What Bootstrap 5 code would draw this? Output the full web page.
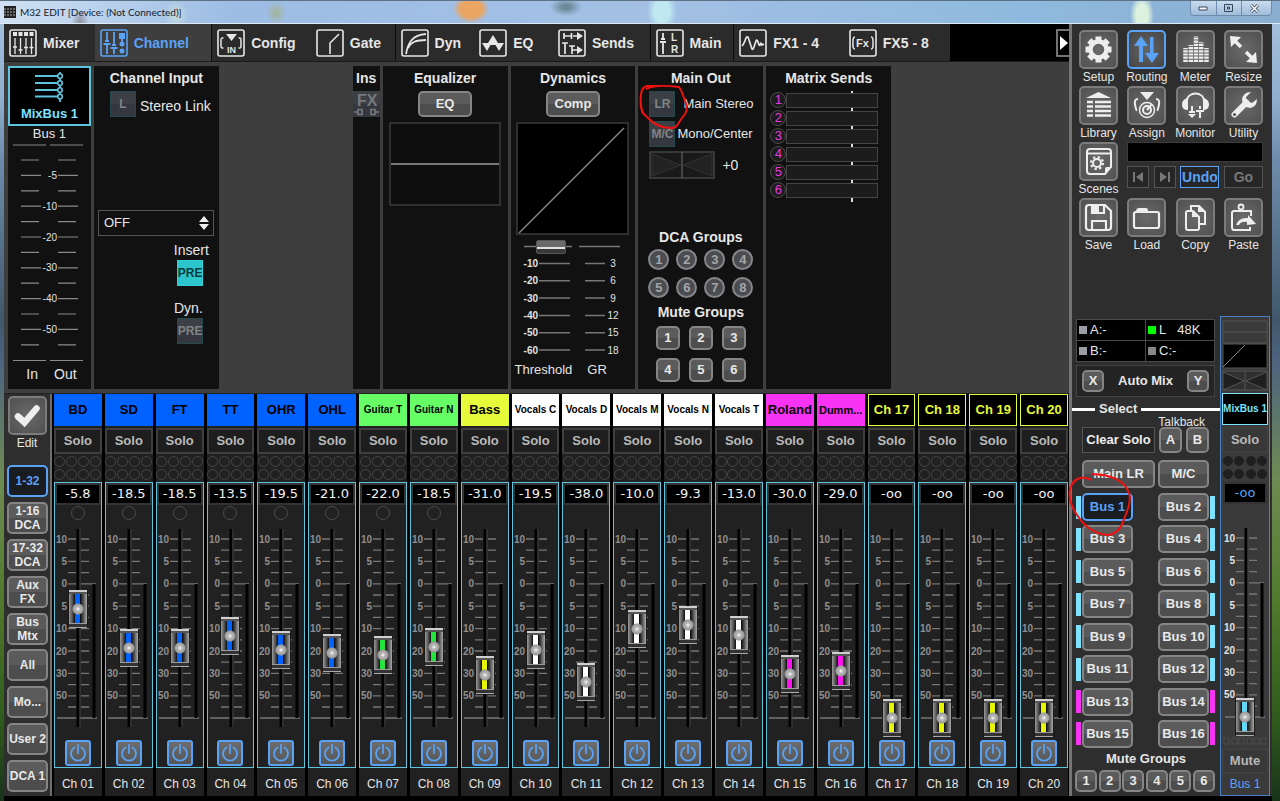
<!DOCTYPE html>
<html lang="en">
<head>
<meta charset="utf-8">
<meta name="viewport" content="width=device-width, initial-scale=1">
<title>M32 EDIT</title>
<link href="https://cdn.jsdelivr.net/npm/bootstrap@5.3.0/dist/css/bootstrap.min.css" rel="stylesheet">
<script src="https://cdn.jsdelivr.net/npm/bootstrap@5.3.0/dist/js/bootstrap.bundle.min.js"></script>
<style>
:root{--blue:#5aa2f6;--cyan:#5fc3dc;--aqua:#7de3ff;--edge:#4a4a4a}
*{border-radius:0}
body{font-family:"Liberation Sans",Arial,sans-serif;font-size:14px;line-height:20px;color:#e6e6e6;min-height:100vh;
 background:linear-gradient(#a9c4e0 0,#8fb0cf 12%,#6d8cab 20%,#41586c 40%,#4d6380 45%,#6e8c52 60%,#507a2c 75%,#2f5a1c 90%,#18331a)}
button{font-weight:bold;padding:0;color:inherit}
svg{display:block}
.titlebar{height:24px;color:#15202c;font:10px/22px Lato,"Open Sans",sans-serif;border-top:1px solid #5d7184;border-bottom:1px solid #dcebf7;
 background:radial-gradient(ellipse 9px 14px at 80px 22px,#8d8fa0,transparent),radial-gradient(ellipse 12px 14px at 176px 14px,#c8dedb,transparent),
 radial-gradient(ellipse 10px 12px at 276px 12px,#a3b49a,transparent),radial-gradient(ellipse 18px 14px at 471px 8px,#eaa562 60%,transparent),
 radial-gradient(ellipse 16px 9px at 566px 6px,#6a8797 20%,transparent),radial-gradient(ellipse 15px 22px at 662px 10px,#bfe8f0 50%,transparent),
 radial-gradient(ellipse 12px 22px at 1142px 14px,#dcf1de 50%,transparent),linear-gradient(90deg,#cfe1f3,#9dbde4 18%,#a3c0e4 50%,#8fb9de 80%,#8aaed0)}
.winbtns{height:15px;border:1px solid #6d8bab;border-top:0;border-radius:0 0 4px 4px;background:linear-gradient(#c9dcee,#9fbcda);width:82px}
.winbtns button{flex:1;border:0;background:none;border-left:1px solid #6d8bab;display:flex;align-items:center;justify-content:center}
.winbtns button:first-child{border-left:0}
.shell{padding:0 8px 6px 4px;background:linear-gradient(#000,#000) 4px 100%/calc(100% - 12px) 8px no-repeat}
.main-side{background:#3e3e3e;min-width:0}
.tool-side{width:203px;background:#2e2e2e;border-left:3px solid #757575}
/* tabs */
.tabs-row{height:38px;background:#000;border-bottom:1px solid #1a1a1a}
.tab{flex:1 1 0;min-width:0;background:#2b2b2b;border:0;display:flex;align-items:center;gap:6px;padding-left:5px;white-space:nowrap;font-size:14px}
.tab.sep{border-left:1px solid #0c0c0c}
.tab.on{background:#3e3e3e;color:var(--blue)}
.tab svg{width:28px;height:28px;flex:none}
/* panels */
.panels{display:grid;gap:3px;padding:4px 0 4px 4px;grid-template-columns:83fr 125fr 128fr 27fr 125fr 125fr 125fr 125fr 175fr;grid-template-rows:323px;border-bottom:1px solid #222}
.pane{background:#111;min-width:0;position:relative}
.pane h2,.side-h{font-size:14px;line-height:25px;font-weight:bold;margin:0;text-align:center;white-space:nowrap}
.sq{width:26px;height:26px;border:1px solid #24484d;background:linear-gradient(#3c3f43 50%,#343740 50%);color:#808386;font-size:12px;line-height:24px;flex:none}
.sq.on{background:#2cc5cb;color:#093c3e;border-color:#2cd0d6}
.key{border:2px solid #858585;border-radius:5px;background:linear-gradient(#5b5b5b 50%,#4d4d4d 50%);color:#e9e9e9;font-size:13px;line-height:16px;text-align:center}
.key.on{background:#191c21;color:var(--blue);border-color:var(--blue)}
.box{border:2px solid #3b3b3b;background:#000}
.disc{width:21px;height:21px;border-radius:50%;border:2px solid #85868a;background:#4b4c4f;color:#a3a5a9;font-size:13px;line-height:17px}
.picker{appearance:none;height:26px;width:calc(100% - 9px);border:1px solid #555;background:#111;color:#e6e6e6;padding-left:5px;font-size:13px}
/* scales */
.scale text{font-family:"Liberation Sans",Arial,sans-serif;fill:#8f8f8f}
.scale.lit text{fill:#e2e2e2}
/* faders */
.fader{height:217px;position:relative}
.fader input,.thresh input{appearance:none;-webkit-appearance:none;writing-mode:vertical-lr;direction:rtl;background:none;margin:0;padding:0}
.fader input{position:absolute;top:0;left:calc(50% - 10px);width:20px;height:217px}
.fader input::-webkit-slider-thumb{appearance:none;-webkit-appearance:none;width:20px;height:38px;border:solid #1a1a1a;border-width:0 1px;
 background:radial-gradient(circle at 50% 50%,#fff 0,#bbb 2px,#999 5px,transparent 6px),
 linear-gradient(#d0d0d0 0 2px,#555 2px 4px,transparent 4px 33px,#9a9a9a 33px 34px,#333 34px 37px,#aaa 37px),
 linear-gradient(90deg,#9a9a9a,#4c4c4c 20%,#000 36%,transparent 36% 60%,#000 60%,#4c4c4c 78%,#aaa),
 linear-gradient(var(--cap),var(--cap))}
.thresh{height:120px;position:relative}
.thresh input{position:absolute;top:0;left:25px;width:30px;height:120px}
.thresh input::-webkit-slider-thumb{appearance:none;-webkit-appearance:none;width:30px;height:14px;border:1px solid #555;border-radius:2px;background:linear-gradient(#6a6a6a 6px,#e0e0e0 6px 8px,#3a3a3a 8px)}
/* matrix */
.send{height:18px}
.send span{width:16px;height:16px;border:1px solid #4b4b4b;border-radius:50%;color:#e738e0;font-size:13px;line-height:14px;text-align:center;flex:none}
.send input{appearance:none;-webkit-appearance:none;height:15px;width:92px;border:1px solid #454545;background:#222;margin:0}
.send input::-webkit-slider-thumb{appearance:none;-webkit-appearance:none;width:1px;height:13px;background:transparent}
.sends{background:linear-gradient(#ddd,#ddd) 81px 0/2px 112px no-repeat;margin:0 4px;padding:0 0 3px}
.send input,.send span{background-color:#1c1c1c}
/* strips */
.rail{width:48px;background:#2e2e2e;border-right:2px solid #6f6f6f;padding:2px 3px 4px}
.rail .key{width:41px;height:32px;line-height:14px;font-size:12px}
.tool{width:39px;height:39px;border:2px solid #7c7c7c;border-radius:5px;background:radial-gradient(#6a6a6a,#505050);color:#eee}
.tool.on{border-color:var(--blue);color:var(--blue);background:radial-gradient(#666,#444)}
.tool svg{width:35px;height:35px}
.cap12{font-size:12px;line-height:17px;text-align:center;white-space:nowrap}
.bank{flex:1;background:#000;display:grid;grid-template-columns:repeat(20,minmax(0,1fr));column-gap:3px;padding:0 1px 0 2px;min-width:0}
.strip{background:#212121;min-width:0}
.tag{height:32px;line-height:32px;text-align:center;font-weight:bold;font-size:13px;white-space:nowrap;background:var(--bg);color:var(--fg)}
.tag.line{border:1px solid var(--fg);line-height:30px}
.tag.narrow{font-family:"Liberation Sans Narrow","Liberation Sans",sans-serif;font-size:11px}
.tag.tight{font-size:10px}
.solo{display:block;width:100%;height:26px;margin-top:2px;border:2px solid #3f3f3f;background:#1e1e1e;color:#b9b9b9;font-size:13px;line-height:20px}
.dots{display:grid;grid-template-columns:repeat(4,11px);justify-content:space-around;align-content:center;row-gap:2px;height:28px}
.dots i{height:11px;border:1px solid #464646;border-radius:50%}
.lane{border:1px solid var(--cyan)}
.readout{display:block;height:22px;border:2px solid #333;background:#000;color:#f2f2f2;text-align:center;font:13px/17px "DejaVu Sans",sans-serif}
.lamp{width:14px;height:14px;margin:1px auto 0}
.lamp.has{border:1px solid #4c4c4c;border-radius:50%}
.power{display:block;width:26px;height:26px;margin:3px auto 1px;border:2px solid var(--blue);border-radius:3px;background:linear-gradient(#6d6d6d,#555);color:var(--blue)}
.foot{height:27px;line-height:32px;font-size:12px;text-align:center}
/* right side */
.tools{display:grid;grid-template-columns:repeat(4,39px);justify-content:space-between;padding:6px 9px 0 7px}
.flat{border:1px solid #555;background:#262626;height:22px;color:#777;font-size:14px;line-height:18px}
.clock{display:grid;grid-template-columns:1fr 1fr;gap:1px;background:#4a4a4a;border:1px solid #4a4a4a;margin:0 5px 0 4px}
.clock div{background:#000;height:20px;font-size:13px;padding-left:2px;display:flex;align-items:center;gap:3px}
.clock i{width:8px;height:8px;background:#9a9da3}
.busgrid{height:255px;display:flex;flex-direction:column;justify-content:space-between;padding:0 5px 0 4px}
.busgrid .key{width:51px;height:28px}
.bar{width:5px;height:23px;background:var(--b)}
.mstrip{width:50px;border:1px solid #4a82c6;background:#3a3a3a;padding:0 1px;margin-right:2px}
.mstrip .lane{border-color:transparent}
.mstrip .dots{grid-template-columns:repeat(4,10px);row-gap:3px}
.mstrip .dots i{background:#1f1f1f;border-color:#1f1f1f;height:10px}
.mstrip .scale text{fill:#e2e2e2}
.ring{position:absolute;pointer-events:none;z-index:5;overflow:visible}
</style>
</head>
<body class="d-flex flex-column">
<svg width="0" height="0" class="position-absolute" aria-hidden="true">
 <defs>
 <g id="fr"><rect x="1" y="1" width="26" height="26" rx="2" fill="none" stroke="currentColor" stroke-width="1.6"/></g>
 <symbol id="t-mixer" viewBox="0 0 28 28"><use href="#fr"/><path fill="currentColor" d="M4 3h4v4H4zM9.5 3h4v4h-4zM15 3h4v4h-4zM20.500 3h4v4h-4z"/><path stroke="currentColor" stroke-width="1.300" d="M6 9v10M11.500 9v12M17 9v9M22.500 9v9M6 19v6M11.500 21v4M17 19v6M22.500 19v6M4 18h4M9.500 21h4M15 18.500h4M20.500 18.500h4"/></symbol>
 <symbol id="t-channel" viewBox="0 0 28 28"><use href="#fr"/><path stroke="currentColor" stroke-width="1.800" d="M7 3v9M7 15v10M14 3v13M14 19v6M22 9v6M3.500 15h7M10.500 19h7M5 12h4M12 16h4"/><path fill="currentColor" d="M19 4h6v6h-6z"/><circle cx="22" cy="15" r="2.500" fill="currentColor"/><circle cx="22" cy="22" r="2.500" fill="currentColor"/></symbol>
 <symbol id="t-config" viewBox="0 0 28 28"><use href="#fr"/><path fill="currentColor" d="M9 5h11l-5.500 7z"/><path fill="none" stroke="currentColor" stroke-width="1.500" d="M6.500 9H5q-1 0-1 2v6q0 2 1 2h1.500M21.500 9H23q1 0 1 2v6q0 2-1 2h-1.500"/><text x="10" y="24" font-size="9" font-weight="bold" fill="currentColor">IN</text></symbol>
 <symbol id="t-gate" viewBox="0 0 28 28"><use href="#fr"/><path fill="none" stroke="currentColor" stroke-width="1.600" d="M14 25V14l9-9"/></symbol>
 <symbol id="t-dyn" viewBox="0 0 28 28"><use href="#fr"/><path fill="none" stroke="currentColor" stroke-width="1.800" d="M5 25C7 14 11 6 25 5M7 19C10 13 15 11 25 11"/></symbol>
 <symbol id="t-eq" viewBox="0 0 28 28"><use href="#fr"/><path fill="currentColor" d="M3 14h6l5-8 5 8h6l-5 8-3.500-6h-5L8 22z"/></symbol>
 <symbol id="t-sends" viewBox="0 0 28 28"><use href="#fr"/><path fill="none" stroke="currentColor" stroke-width="1.700" d="M6 4v6M6 7h5M11 7h2M13.500 4v6M15 7h6M4 14h6M7 14v11M11 17h6M14 17v8M14 21h7"/><path fill="currentColor" d="M19 3l6 4-6 4zM19 17l6 4-6 4z"/></symbol>
 <symbol id="t-main" viewBox="0 0 28 28"><use href="#fr"/><path stroke="currentColor" stroke-width="1.800" d="M7 4v6M7 13v12M4 13h6M5 10h4"/><text x="15" y="12" font-size="10" font-weight="bold" fill="currentColor">L</text><text x="15" y="24" font-size="10" font-weight="bold" fill="currentColor">R</text></symbol>
 <symbol id="t-fx1" viewBox="0 0 28 28"><use href="#fr"/><path fill="none" stroke="currentColor" stroke-width="1.700" d="M3 17q2-2 4-8q2-3 3 2l3 9q1 1 2-2l2-6q1-2 2 1l1 3q1 1 1.500-1t1.500 1l2-1"/></symbol>
 <symbol id="t-fx5" viewBox="0 0 28 28"><use href="#fr"/><path fill="none" stroke="currentColor" stroke-width="1.500" d="M6 8Q3.500 8 4 14Q3.500 20 6 20M22 8q2.500 0 2 6q.5 6-2 6"/><text x="7" y="18" font-size="11" font-weight="bold" fill="currentColor">Fx</text></symbol>
 <symbol id="i-setup" viewBox="0 0 35 35"><circle cx="17.500" cy="17.500" r="8" fill="none" stroke="currentColor" stroke-width="4.500"/><path stroke="currentColor" stroke-width="6" d="M17.500 4.500v5M17.500 25.500v5M4.500 17.500h5M25.500 17.500h5M8.300 8.300l3.500 3.500M23.200 23.200l3.500 3.500M26.700 8.300l-3.500 3.500M11.800 23.200l-3.500 3.500"/></symbol>
 <symbol id="i-routing" viewBox="0 0 35 35"><path fill="currentColor" d="M5 14l7-10 7 10h-5v16h-4V14zM16 21h5V5h3.500v16H30l-7 10z"/></symbol>
 <symbol id="i-meter" viewBox="0 0 35 35"><path stroke="currentColor" stroke-width="4.500" stroke-dasharray="2.200 1" d="M7.500 30V16M12.800 30V13M18 30V4M23.200 30V10M28.500 30V16" /></symbol>
 <symbol id="i-resize" viewBox="0 0 35 35"><path stroke="currentColor" stroke-width="3.500" d="M8 8l7 7M20 20l7 7"/><path fill="currentColor" d="M4 4l11 1-10 10zM31 31l-11-1 10-10z"/></symbol>
 <symbol id="i-library" viewBox="0 0 35 35"><path fill="currentColor" d="M5 10l12.500-6L30 10z"/><path stroke="currentColor" stroke-width="2.500" d="M6 14h6M14 14h16M6 18.500h6M14 18.500h16M6 23h6M14 23h16M6 27.500h6M14 27.500h16"/></symbol>
 <symbol id="i-assign" viewBox="0 0 35 35"><path fill="currentColor" d="M11 4h14l-7 8z"/><circle cx="18" cy="22" r="7.500" fill="none" stroke="currentColor" stroke-width="1.500"/><circle cx="18" cy="22" r="4" fill="none" stroke="currentColor" stroke-width="2"/><path fill="none" stroke="currentColor" stroke-width="2" d="M18 22l5-6M9 11q-4 0-3 5.500t2 6M27 11q4 0 3 5.500t-2 6"/></symbol>
 <symbol id="i-monitor" viewBox="0 0 35 35"><path fill="none" stroke="currentColor" stroke-width="1.800" d="M9 13C9 3 26 3 26 13"/><path fill="currentColor" d="M10 10q-6 1-6 6.500t6 5.500zM25 10q6 1 6 6.500t-6 5.500zM10 26h8l-4 4zM18 22h8v2h-8z"/><path stroke="currentColor" stroke-width="2" d="M14 18v6M11 24h6M22 18v3M22 22v8"/></symbol>
 <symbol id="i-utility" viewBox="0 0 35 35"><path fill="none" stroke="currentColor" stroke-width="6" stroke-linecap="round" d="M8.500 26.500l12-12"/><path fill="currentColor" d="M25 4q-8 0-9 8l1 4 3 3 4 1q7-1 7-9l-5 4-5-2-1-4z"/><circle cx="8.500" cy="26.500" r="1.600" fill="#555"/></symbol>
 <symbol id="i-scenes" viewBox="0 0 35 35"><path fill="none" stroke="currentColor" stroke-width="2" d="M24 30H9q-3 0-3-3V8q0-3 3-3h18q3 0 3 3v15zM6 9.500h24"/><path fill="currentColor" d="M24 30v-5q0-2 2-2h4z"/><circle cx="16" cy="19" r="4" fill="none" stroke="currentColor" stroke-width="2"/><circle cx="16" cy="19" r="6" fill="none" stroke="currentColor" stroke-width="2.200" stroke-dasharray="2.300 2.400"/></symbol>
 <symbol id="i-save" viewBox="0 0 35 35"><path fill="none" stroke="currentColor" stroke-width="2.200" d="M5 8q0-3 3-3h16l6 6v16q0 3-3 3H8q-3 0-3-3zM11 30v-9h14v9M11 5v8h12V5"/><path fill="currentColor" d="M11 5h7v8h-7z"/></symbol>
 <symbol id="i-load" viewBox="0 0 35 35"><path fill="none" stroke="currentColor" stroke-width="2.200" d="M5 14q0-2 2-2h21q2 0 2 2v12q0 2-2 2H7q-2 0-2-2z"/><path fill="currentColor" d="M7 12q0-4 3-4h7q2 0 2 3v1z"/></symbol>
 <symbol id="i-copy" viewBox="0 0 35 35"><path fill="none" stroke="currentColor" stroke-width="2" d="M13 10V6h8l6 6v12h-6M8 13q0-2 2-2h5l6 6v11q0 2-2 2h-9q-2 0-2-2z"/><path fill="currentColor" d="M14 11v6h7zM20 5v7h7z"/></symbol>
 <symbol id="i-paste" viewBox="0 0 35 35"><path fill="none" stroke="currentColor" stroke-width="2" d="M13 11H8q-2 0-2 2v14q0 3 2 3h16v-3M13 11h12v5"/><circle cx="15" cy="7" r="2.500" fill="none" stroke="currentColor" stroke-width="1.800"/><path fill="currentColor" d="M10 25q3-8 12-7v-3l8 9-9 1v-3q-6-1-8 3z"/></symbol>
 <symbol id="i-check" viewBox="0 0 35 35"><path fill="none" stroke="currentColor" stroke-width="6.500" stroke-linecap="round" d="M8 18.500l6.500 6L26.500 10.500"/></symbol>
 <symbol id="i-power" viewBox="0 0 22 22"><path fill="none" stroke="currentColor" stroke-width="1.800" stroke-linecap="round" d="M7.500 5.500a7 7 0 1 0 7 0M11 3v8"/></symbol>
 </defs>
</svg>

<header class="titlebar d-flex justify-content-between">
 <div class="d-flex align-items-center ps-1"><svg width="12" height="12" class="me-1"><path fill="#222" d="M0 0h12v12H0z"/><path stroke="#aaa" stroke-dasharray="2 1" d="M0 3h12M0 6h12M0 9h12"/></svg><span>M32 EDIT [Device: (Not Connected)]</span></div>
 <div class="winbtns d-flex me-2">
  <button aria-label="Minimize"><svg width="10" height="6"><path fill="#fff" stroke="#345" d="M1 2h8v3H1z"/></svg></button>
  <button aria-label="Maximize"><svg width="10" height="9"><path fill="none" stroke="#345" d="M.5.500h8v7h-8zM3.500 3h2v2h-2z"/></svg></button>
  <button aria-label="Close" class="pe-1"><svg width="10" height="9"><path stroke="#345" stroke-width="3" d="M1 1l7 7M8 1L1 8"/><path stroke="#fff" stroke-width="1.500" d="M1 1l7 7M8 1L1 8"/></svg></button>
 </div>
</header>

<div class="shell d-flex flex-grow-1">
 <main class="main-side flex-grow-1 d-flex flex-column">
  <nav class="tabs-row d-flex" id="tabs" aria-label="Views"></nav>

  <section class="panels">
   <div class="pane">
    <div class="text-center" style="height:60px;border:2px solid var(--cyan);background:#000;color:var(--aqua)">
     <svg class="mx-auto" width="32" height="36" viewBox="0 0 32 36"><path stroke="#5fc3dc" stroke-width="1.800" d="M2 8h23M2 15h23M2 22h23M2 28.500h23M27 4v30"/><g fill="#000" stroke="#5fc3dc" stroke-width="1.600"><circle cx="27" cy="8" r="2.300"/><circle cx="27" cy="15" r="2.300"/><circle cx="27" cy="22" r="2.300"/><circle cx="27" cy="28.500" r="2.300"/></g></svg>
     <div class="fw-bold" style="font-size:13px">MixBus 1</div>
    </div>
    <div class="text-center" style="font-size:13px;line-height:16px">Bus 1</div>
    <svg class="scale lit mx-auto" id="meter" width="78" height="222" viewBox="0 0 78 222"></svg>
    <div class="d-flex justify-content-center gap-3 ps-1" style="font-size:14px"><span>In</span><span>Out</span></div>
   </div>

   <div class="pane">
    <h2>Channel Input</h2>
    <div class="d-flex align-items-center ms-3"><button class="sq" id="lnk">L</button><label for="lnk" class="ps-1 pt-1">Stereo Link</label></div>
    <div class="position-relative" style="margin-top:93px"><select class="picker ms-1" aria-label="Source"><option>OFF</option></select>
     <svg class="position-absolute" style="right:10px;top:6px" width="10" height="14"><path fill="#eee" d="M0 6l5-6 5 6zM0 8h10l-5 6z"/></svg></div>
    <div class="d-flex flex-column align-items-end pe-3">
     <label for="pre1" class="pt-1" style="margin-right:-6px">Insert</label><button class="sq on" id="pre1">PRE</button>
     <label for="pre2" style="margin-top:12px">Dyn.</label><button class="sq" id="pre2">PRE</button>
    </div>
   </div>
   <div></div>

   <div class="pane"><h2>Ins</h2>
    <button class="sq w-100 border-0 d-block" aria-label="FX insert"><svg class="mx-auto" width="25" height="26"><text x="3" y="15" font-size="16" font-weight="bold" fill="#77797d">FX</text><path fill="none" stroke="#77797d" stroke-width="1.600" d="M0 21h4M4 18.500h4v5H4zM25 21h-4M17 18.500h4v5h-4z"/></svg></button></div>

   <div class="pane"><h2>Equalizer</h2>
    <button class="key d-block mx-auto" style="width:54px;height:26px">EQ</button>
    <svg class="d-block mx-auto mt-1" width="112" height="85"><rect x="1" y="2" width="110" height="82" fill="#0e0e0e" stroke="#3b3b3b" stroke-width="1.500"/><path stroke="#777" stroke-width="2" d="M2 43h108"/></svg></div>

   <div class="pane"><h2>Dynamics</h2>
    <button class="key d-block mx-auto" style="width:54px;height:26px">Comp</button>
    <svg class="d-block mx-auto mt-1" width="113" height="115"><rect x="1" y="2" width="111" height="111" fill="#000" stroke="#3b3b3b" stroke-width="1.500"/><path stroke="#808080" stroke-width="1.600" d="M3 112L108 7"/></svg>
    <div class="thresh mt-1"><svg class="scale lit" id="thr" width="125" height="120" viewBox="2 0 125 120"></svg><input type="range" min="0" max="60" value="60" aria-label="Threshold"></div>
    <div class="d-flex" style="font-size:13px"><span class="ps-1" style="margin-right:15px">Threshold</span><span>GR</span></div></div>

   <div class="pane"><h2>Main Out</h2>
    <div class="position-relative d-flex align-items-center" style="padding-left:11px;gap:8px"><button class="sq" id="lr">LR</button><label for="lr" style="font-size:13px" class="text-nowrap">Main Stereo</label>
     <svg class="ring" style="left:0;top:-8px" width="54" height="48"><path fill="none" stroke="#f01010" stroke-width="2" d="M8 6q10-5 33-2c3 4 4 8 6 14c3 6 2 12-3 17c-4 5-5 11-12 10c-10 0-17-4-24-12c-5-3-6-13-5-22q1-7 6-8h14"/></svg></div>
    <div class="d-flex align-items-center mt-1" style="padding-left:11px;gap:2px"><button class="sq" id="mc">M/C</button><label for="mc" style="font-size:13px" class="text-nowrap">Mono/Center</label></div>
    <div class="d-flex align-items-center" style="padding-left:11px;gap:7px;margin-top:4px"><svg width="66" height="28"><rect x="1" y="1" width="64" height="26" fill="#191919" stroke="#444" stroke-width="1.500"/><path fill="#222" stroke="#333" d="M3 3l29 11L3 25zM63 3L34 14l29 11z"/><path stroke="#555" stroke-width="1.500" d="M33 1v26"/></svg><span>+0</span></div>
    <h2 style="margin-top:46px;line-height:24px">DCA Groups</h2>
    <div class="d-grid mx-auto" id="dca" style="grid-template-columns:repeat(4,21px);gap:7px;width:105px"></div>
    <h2 style="line-height:28px">Mute Groups</h2>
    <div class="d-grid mx-auto" id="mg" style="grid-template-columns:repeat(3,24px);gap:8px 9px;width:90px"></div>
   </div>

   <div class="pane"><h2>Matrix Sends</h2><div class="sends" id="sends"></div></div>
   <div></div>
  </section>

  <section class="d-flex flex-grow-1">
   <div class="rail">
    <button class="tool d-block mx-auto" id="edit"><svg><use href="#i-check"/></svg></button><label for="edit" class="cap12 d-block">Edit</label>
    <div class="d-flex flex-column justify-content-between" id="layers" style="height:327px;margin-top:13px"></div>
   </div>
   <div class="bank" id="bank"></div>
  </section>
 </main>

 <aside class="tool-side d-flex flex-column">
  <div class="tools" id="tools"></div>
  <div class="d-flex flex-grow-1" style="margin-top:62px">
   <div class="flex-grow-1" style="margin-top:3px;width:149px">
    <div class="clock"><div><i></i>A:-</div><div><i style="background:#0f0"></i>L<span class="ps-2">48K</span></div><div><i></i>B:-</div><div><i style="background:#888"></i>C:-</div></div>
    <div class="d-flex justify-content-between align-items-center" style="margin:3px 5px 0 4px;height:32px;border:1px solid #444;background:#242424;padding:0 5px"><button class="key" style="width:22px;height:22px">X</button><span class="fw-bold" style="font-size:13px">Auto Mix</span><button class="key" style="width:22px;height:22px">Y</button></div>
    <div class="d-flex align-items-center fw-bold" style="font-size:13px;line-height:18px;gap:4px;margin-top:3px"><span class="bg-white" style="height:3px;width:23px"></span>Select<span class="bg-white flex-grow-1" style="height:3px"></span></div>
    <div class="text-end" style="font-size:12px;line-height:9px;padding-right:15px">Talkback</div>
    <div class="d-flex" style="margin:0 11px 0 10px;gap:4px"><button class="flat flex-grow-1" style="height:26px;color:#eee;font-size:13px;white-space:nowrap">Clear Solo</button><button class="key" style="width:23px;height:26px">A</button><button class="key" style="width:23px;height:26px">B</button></div>
    <div class="d-flex" style="margin:7px 11px 5px 10px;gap:3px"><button class="key flex-grow-1" style="height:28px">Main LR</button><button class="key" style="width:51px;height:28px">M/C</button></div>
    <div class="busgrid position-relative" id="buses"></div>
    <div class="fw-bold text-center" style="line-height:22px;font-size:13px">Mute Groups</div>
    <div class="d-flex justify-content-between" id="mg2" style="padding:0 5px 0 3px"></div>
   </div>
   <div class="mstrip" id="mstrip"></div>
  </div>
 </aside>
</div>

<script>
const $ = id => document.getElementById(id);
const each = (n, f) => Array.from({length: n}, (_, i) => f(i)).join('');

const tabs = [['mixer','Mixer',91],['channel','Channel',117],['config','Config',99],['gate','Gate',84],['dyn','Dyn',79],['eq','EQ',79],['sends','Sends',97],['main','Main',83],['fx1','FX1 - 4',110],['fx5','FX5 - 8',107]];
$('tabs').innerHTML = tabs.map(([i, t, w]) => `<button class="tab${i=='channel'?' on':''}${['config','dyn','main','fx1'].includes(i)?' sep':''}" style="flex-grow:${w - 5}"><svg><use href="#t-${i}"/></svg>${t}</button>`).join('')
 + '<span style="flex:106 1 0"></span><button class="border-0 bg-black" aria-label="More" style="flex:13 1 0"><svg width="13" height="28"><path fill="#000" stroke="#999" stroke-width="1.500" d="M14 1H1v26h13"/><path fill="#fff" d="M4 7l8 7-8 7z"/></svg></button>';

/* input and output meter scale */
$('meter').innerHTML = '<g stroke="#8a8a8a" stroke-width="1.200"><path d="M3 3h33M40 3h33M3 218.500h33M40 218.500h33"/>'
 + each(13, i => {const y = 18 + i * 15.4; return `<path d="M11 ${y}h${i%2?20:18}M48 ${y}h${i%2?20:18}"/>`}) + '</g>'
 + [5,10,20,30,40,50].map((v, i) => `<text x="47" y="${37 + i * 30.8}" font-size="10" text-anchor="end">-${v}</text>`).join('');

$('thr').innerHTML = '<g stroke="#777" stroke-width="1.500"><path d="M15 6.500h48M70 6.500h41"/>' + each(6, i => `<path d="M30 ${23.500 + i * 17.300}h31M76 ${23.500 + i * 17.300}h20"/>`) + '</g>'
 + each(6, i => `<text x="29" y="${27 + i * 17.300}" font-size="10" font-weight="bold" text-anchor="end">-${(i + 1) * 10}</text><text x="104" y="${27 + i * 17.300}" font-size="10" text-anchor="middle">${(i + 1) * 3}</text>`);

$('dca').innerHTML = each(8, i => `<button class="disc">${i + 1}</button>`);
$('mg').innerHTML = each(6, i => `<button class="key" style="height:24px">${i + 1}</button>`);
$('mg2').innerHTML = each(6, i => `<button class="key" style="width:22px;height:22px">${i + 1}</button>`);
$('sends').innerHTML = each(6, i => `<label class="send d-flex align-items-center"><span>${i + 1}</span><input type="range" value="0" aria-label="Matrix ${i + 1}"></label>`);
$('layers').innerHTML = ['1-32','1-16<br>DCA','17-32<br>DCA','Aux<br>FX','Bus<br>Mtx','All','Mo...','User 2','DCA 1'].map((t, i) => `<button class="key${i ? '' : ' on'}">${t}</button>`).join('');

/* channel strips: name, tag fill, text, cap colour, level, fader travel, lamp */
const B = ['#0062ff','#000','#0062ff'], G = ['#66ff66','#000','#22e639'], W = ['#fff','#000','#fff'], P = ['#f933f3','#000','#ff10f0'], Y = ['#000','#e6fb3a','#e8f500'];
const chans = [['BD',B,'-5.8',109],['SD',B,'-18.5',70],['FT',B,'-18.5',70],['TT',B,'-13.5',82],['OHR',B,'-19.5',68],['OHL',B,'-21.0',65],
 ['Guitar T',G,'-22.0',63],['Guitar N',G,'-18.5',71],['Bass',['#e6fb3a','#000','#e8f500'],'-31.0',43],['Vocals C',W,'-19.5',68],['Vocals D',W,'-38.0',36],
 ['Vocals M',W,'-10.0',89],['Vocals N',W,'-9.3',93],['Vocals T',W,'-13.0',83],['Roland',P,'-30.0',44],['Dumm...',P,'-29.0',47],
 ['Ch 17',Y,'-oo',0],['Ch 18',Y,'-oo',0],['Ch 19',Y,'-oo',0],['Ch 20',Y,'-oo',0]];
const marks = {0:10, 2:5, 4:0, 6:5, 8:10, 10:20, 12:30, 14:50};
const scale = '<svg class="scale mx-auto" width="46" height="217" viewBox="1 0 46 217"><g stroke="#777" stroke-width="1.300">'
 + each(16, i => {const y = 19 + i * 11.200; return `<path d="M14 ${y}h8M27 ${y}h${i == 4 ? 15 : 8}"/>`}) + '<path d="M3 198h40"/></g>'
 + '<path stroke="#000" stroke-width="3" d="M24 9v198M40 64v134"/><path stroke="#444" d="M26 9v198"/>'
 + Object.entries(marks).map(([i, t]) => `<text x="13" y="${22.500 + i * 11.200}" font-size="10" font-weight="bold" text-anchor="end">${t}</text>`).join('') + '</svg>';
const fader = (name, v, c) => `<div class="fader">${scale}<input type="range" min="0" max="179" value="${v}" aria-label="${name} level" style="--cap:${c}"></div>`;
const dots = '<div class="dots">' + '<i></i>'.repeat(8) + '</div>';

$('bank').innerHTML = chans.map(([n, c, db, v], k) => {
 const ch = 'Ch ' + String(k + 1).padStart(2, '0');
 return `<article class="strip"><div class="tag${c == Y ? ' line' : ''}${n.length > 6 ? ' narrow' : ''}${n.length > 7 ? ' tight' : ''}" style="--bg:${c[0]};--fg:${c[1]}">${n}</div>
 <button class="solo">Solo</button>${dots}<div class="lane"><output class="readout">${db}</output><div class="lamp${k < 8 ? ' has' : ''}"></div>
 ${fader(n, v, c[2])}<button class="power" aria-label="${n} on"><svg width="22" height="22"><use href="#i-power"/></svg></button></div><div class="foot">${ch}</div></article>`;
}).join('');

$('mstrip').innerHTML = `<svg class="mx-auto" width="46" height="76"><path fill="none" stroke="#555" d="M1 4h44v22H1zM1 15h44"/><path fill="#000" stroke="#555" d="M1 27h44v24H1z"/><path stroke="#888" d="M1 50L23 28"/><path fill="#303030" stroke="#555" d="M1 54h44v19H1z"/><path fill="#1f1f1f" stroke="#555" d="M1 55l21 9-21 9zM45 55l-21 9 21 9zM23 54v20"/></svg>
 <div class="tag line narrow tight" style="--bg:#000;--fg:#7de3ff">MixBus 1</div><button class="solo" style="background:#383838">Solo</button>${dots}
 <div class="lane"><output class="readout" style="color:var(--blue)">-oo</output><div class="lamp"></div>${fader('MixBus 1', 0, '#5fd8f8')}
 <svg width="44" height="11"><path fill="none" stroke="#4c4c4c" d="M1 2h5v6H1zM9 2h5v6H9zM16 2h5v6h-5zM24 2h5v6h-5zM31 2h5v6h-5zM38 2h5v6h-5z"/></svg></div>
 <button class="solo mt-0" style="background:#383838">Mute</button><div class="cap12" style="color:var(--blue);line-height:20px">Bus 1</div>`;

$('buses').innerHTML = each(8, r => {
 const c = r > 5 ? '#f933f3' : '#7de3ff', bar = `<span class="bar" style="--b:${c}"></span>`, a = r * 2 + 1;
 return `<div class="d-flex align-items-center" style="gap:1px">${bar}<button class="key${r ? '' : ' on'}">Bus ${a}</button><button class="key ms-auto">Bus ${a + 1}</button>${bar}</div>`;
}) + '<svg class="ring" style="left:-5px;top:-22px" width="66" height="66"><path fill="none" stroke="#f01010" stroke-width="2" d="M25 9Q8 2 3 18C1 28 6 38 10 44Q22 63 42 64Q53 62 57 48Q65 30 62 22Q56 4 24 3"/></svg>';

const tool = (i, t) => `<div><button class="tool d-block${t == 'Routing' ? ' on' : ''}" id="b-${i}"><svg><use href="#i-${i}"/></svg></button><label for="b-${i}" class="cap12 d-flex justify-content-center">${t}</label></div>`;
$('tools').innerHTML = [['setup','Setup'],['routing','Routing'],['meter','Meter'],['resize','Resize'],['library','Library'],['assign','Assign'],['monitor','Monitor'],['utility','Utility'],['scenes','Scenes']].map(a => tool(...a)).join('')
 + `<div style="grid-column:span 3"><div class="box" style="height:20px;border-width:1px"></div><div class="d-flex justify-content-between" style="margin-top:4px">
 <button class="flat" style="width:22px" aria-label="Previous"><svg class="mx-auto" width="12" height="12"><path fill="#777" d="M1 1h2v10H1zM11 1v10L4 6z"/></svg></button><button class="flat" style="width:22px" aria-label="Next"><svg class="mx-auto" width="12" height="12"><path fill="#777" d="M9 1h2v10H9zM1 1v10l7-5z"/></svg></button>
 <button class="flat" style="width:39px;color:var(--blue);border-color:var(--blue)">Undo</button><button class="flat" style="width:39px">Go</button></div></div>`
 + [['save','Save'],['load','Load'],['copy','Copy'],['paste','Paste']].map(a => tool(...a)).join('');
</script>
</body>
</html>
